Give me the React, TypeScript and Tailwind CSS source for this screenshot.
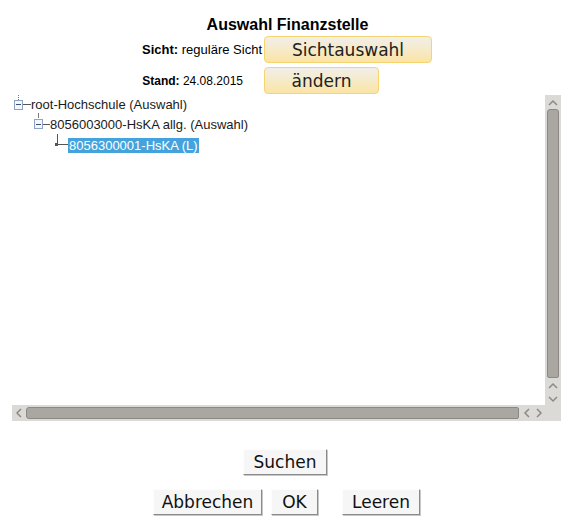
import React from "react";

const sans = "font-['Liberation_Sans',Arial,sans-serif]";
const deja = "font-['DejaVu_Sans',Verdana,sans-serif]";

function Chevron({ dir }: { dir: "up" | "down" | "left" | "right" }) {
    const pts = {
        up: "1,6 5,2 9,6",
        down: "1,2 5,6 9,2",
        left: "6,1 2,5 6,9",
        right: "2,1 6,5 2,9",
    }[dir];
    const vertical = dir === "up" || dir === "down";
    return (
        <svg width={vertical ? 10 : 8} height={vertical ? 8 : 10} viewBox={vertical ? "0 0 10 8" : "0 0 8 10"}>
            <polyline points={pts} fill="none" stroke="#8c8a87" strokeWidth="1.5" />
        </svg>
    );
}

function MinusBox() {
    return (
        <div className="relative w-[9px] h-[10px] border border-[#8ea3c4] bg-[#f4f6fa] flex items-center justify-center">
            <div className="w-[5px] h-px bg-[#3c4f74]" />
        </div>
    );
}

function YellowButton({ label, width }: { label: string; width: string }) {
    return (
        <button
            className={`${deja} ${width} h-[27px] pt-[1px] rounded-[4px] border border-[#f6d46f] bg-gradient-to-b from-[#f1efea] to-[#fbe4a4] text-[17px] leading-none text-[#222] text-center`}
        >
            {label}
        </button>
    );
}

function GreyButton({ label, width }: { label: string; width: string }) {
    return (
        <button
            className={`${deja} ${width} h-[26px] bg-[#f6f6f6] border border-t-[#fdfdfd] border-l-[#fdfdfd] border-r-[#8a8a8a] border-b-[#8a8a8a] shadow-[1px_1px_0_#c8c8c8] text-[17px] leading-none text-[#111]`}
        >
            {label}
        </button>
    );
}

export default function App() {
    return (
        <div className={`${sans} w-[575px] h-[530px] bg-white text-black flex flex-col`}>
            {/* Header */}
            <div className="pt-[16px] text-center text-[16px] font-bold leading-[18px]">Auswahl Finanzstelle</div>

            <div className="mt-[2px] flex flex-col gap-[3px]">
                <div className="flex items-center">
                    <div className="w-[264px] pr-[2px] text-right text-[13px] whitespace-nowrap">
                        <span className="font-bold">Sicht:</span> reguläre Sicht
                    </div>
                    <YellowButton label="Sichtauswahl" width="w-[168px]" />
                </div>
                <div className="flex items-center pt-[1px]">
                    <div className="w-[264px] pr-[21px] text-right text-[12px] whitespace-nowrap">
                        <span className="font-bold">Stand:</span> 24.08.2015
                    </div>
                    <YellowButton label="ändern" width="w-[115px]" />
                </div>
            </div>

            {/* Tree box */}
            <div className="ml-[12px] mt-[1px] w-[549px] h-[326px] flex flex-col">
                <div className="flex flex-1 min-h-0">
                    <div className="flex-1 bg-white text-[13px] text-[#1a1a1a] relative">
                        {/* row 1 */}
                        <div className="absolute left-[6px] top-0 h-[5px] border-l border-dotted border-[#777]" />
                        <div className="flex items-center h-[19px] pl-[2px]">
                            <MinusBox />
                            <div className="w-[8px] h-px bg-[#555]" />
                            <span className="leading-[15px]">root-Hochschule (Auswahl)</span>
                        </div>
                        {/* row 2 */}
                        <div className="flex items-center h-[20px] pl-[22px] relative">
                            <div className="absolute left-[26px] top-[-1px] h-[5px] border-l border-[#777]" />
                            <MinusBox />
                            <div className="w-[7px] h-px bg-[#555]" />
                            <span className="leading-[15px]">8056003000-HsKA allg. (Auswahl)</span>
                        </div>
                        {/* row 3 */}
                        <div className="flex items-end h-[19px] pl-[44px] relative">
                            <div className="absolute left-[45px] top-[0px] h-[9px] border-l border-[#555]" />
                            <div className="relative mb-[8px] w-[12px] h-px bg-[#555]">
                                <div className="absolute left-[-1px] top-[-1px] w-[3px] h-[3px] bg-[#555]" />
                            </div>
                            <span className="leading-[15px] bg-[#44a3dd] text-white px-[1px]">8056300001-HsKA (L)</span>
                        </div>
                    </div>
                    {/* vertical scrollbar */}
                    <div className="w-[16px] bg-[#dcdad7] flex flex-col items-center">
                        <div className="h-[13px] flex items-center justify-center mt-[1px]">
                            <Chevron dir="up" />
                        </div>
                        <div className="w-[12px] flex-1 mb-[2px] rounded-t-[3px] rounded-b-[2px] bg-[#aaa6a2] border border-[#8c8884]" />
                        <div className="h-[12px] flex items-center justify-center">
                            <Chevron dir="up" />
                        </div>
                        <div className="h-[13px] flex items-center justify-center">
                            <Chevron dir="down" />
                        </div>
                    </div>
                </div>
                {/* horizontal scrollbar */}
                <div className="h-[16px] flex bg-[#dcdad7]">
                    <div className="flex-1 flex items-center">
                        <div className="w-[13px] flex items-center justify-center">
                            <Chevron dir="left" />
                        </div>
                        <div className="flex-1 h-[12px] ml-[1px] rounded-l-[3px] rounded-r-[2px] bg-[#aaa6a2] border border-[#8c8884]" />
                        <div className="w-[26px] flex items-center justify-around pl-[2px]">
                            <Chevron dir="left" />
                            <Chevron dir="right" />
                        </div>
                    </div>
                    <div className="w-[16px]" />
                </div>
            </div>

            {/* Buttons */}
            <div className="mt-[28px] flex justify-center pr-[5px]">
                <GreyButton label="Suchen" width="w-[84px]" />
            </div>
            <div className="mt-[14px] flex pl-[153px]">
                <GreyButton label="Abbrechen" width="w-[109px]" />
                <div className="w-[9px]" />
                <GreyButton label="OK" width="w-[47px]" />
                <div className="w-[24px]" />
                <GreyButton label="Leeren" width="w-[78px]" />
            </div>
        </div>
    );
}
